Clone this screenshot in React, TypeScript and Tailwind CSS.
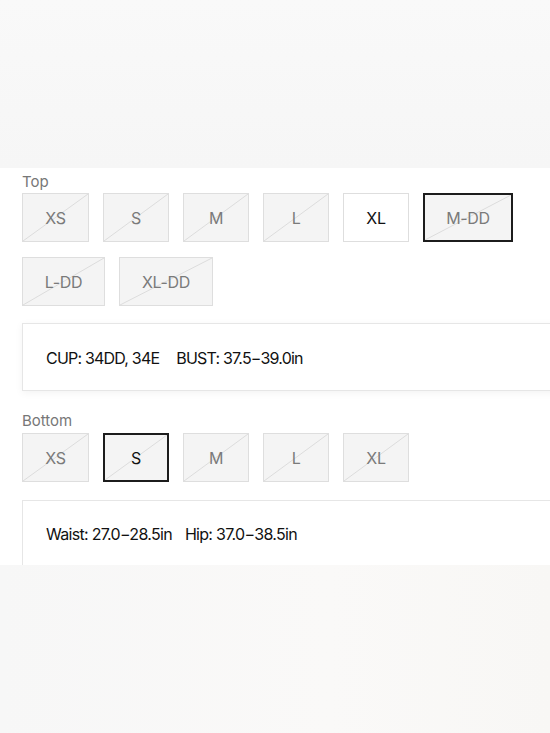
import React from 'react';

type Size = { label: string; w: number; disabled?: boolean; selected?: boolean };

const topSizes: Size[] = [
  { label: 'XS', w: 67, disabled: true },
  { label: 'S', w: 66, disabled: true },
  { label: 'M', w: 66, disabled: true },
  { label: 'L', w: 66, disabled: true },
  { label: 'XL', w: 66 },
  { label: 'M-DD', w: 90, disabled: true, selected: true },
  { label: 'L-DD', w: 83, disabled: true },
  { label: 'XL-DD', w: 94, disabled: true },
];

const bottomSizes: Size[] = [
  { label: 'XS', w: 67, disabled: true },
  { label: 'S', w: 66, disabled: true, selected: true },
  { label: 'M', w: 66, disabled: true },
  { label: 'L', w: 66, disabled: true },
  { label: 'XL', w: 66, disabled: true },
];

function SizeButton({ s, darkText }: { s: Size; darkText?: boolean }) {
  const border = s.selected ? 'border-2 border-[#1c1c1c]' : 'border border-[#dedede]';
  const bg = s.disabled ? 'bg-[#f4f4f4]' : 'bg-white';
  const color = s.disabled && !darkText ? 'text-[#7a7a7a]' : 'text-[#111]';
  return (
    <button
      className={`relative h-[49px] flex items-center justify-center text-[16px] tracking-[-0.3px] ${border} ${bg} ${color}`}
      style={{ width: s.w }}
    >
      {s.disabled && (
        <svg className="absolute inset-0 w-full h-full" preserveAspectRatio="none" viewBox="0 0 100 100">
          <line x1="0" y1="100" x2="100" y2="0" stroke="#dcdcdc" strokeWidth="1" vectorEffect="non-scaling-stroke" />
        </svg>
      )}
      <span className="relative">{s.label}</span>
    </button>
  );
}

export default function App() {
  return (
    <div className="w-[550px] h-[733px] flex flex-col overflow-hidden" style={{ fontFamily: 'Inter, "Liberation Sans", sans-serif' }}>
      <div className="h-[168px] shrink-0 bg-[linear-gradient(to_bottom,#f9f9f9,#f6f6f6)]" />
      <div className="bg-white pl-[22px] pt-[4px] overflow-hidden">
        <div className="text-[15px] leading-[20px] text-[#777] mb-[1px]">Top</div>
        <div className="flex flex-wrap gap-x-[14px] gap-y-[15px] w-[510px]">
          {topSizes.map((s) => (
            <SizeButton key={s.label} s={s} />
          ))}
        </div>
        <div className="mt-[17px] w-[600px] h-[68px] border border-[#e6e6e6] bg-white shadow-[0_2px_8px_rgba(0,0,0,0.05)] flex items-center pl-[23px] pt-[1px] text-[16px] tracking-[-0.8px] text-[#111]">
          <span>CUP: 34DD, 34E</span>
          <span className="ml-[17px]">BUST: 37.5−39.0in</span>
        </div>
        <div className="mt-[20px] text-[15px] leading-[20px] text-[#777] mb-[2px]">Bottom</div>
        <div className="flex gap-x-[14px]">
          {bottomSizes.map((s) => (
            <SizeButton key={s.label} s={s} darkText={s.selected} />
          ))}
        </div>
        <div className="mt-[18px] w-[600px] h-[65px] border border-b-0 border-[#e6e6e6] bg-white flex items-center pl-[23px] pt-[2px] text-[16px] tracking-[-0.7px] text-[#111]">
          <span>Waist: 27.0−28.5in</span>
          <span className="ml-[13px]">Hip: 37.0−38.5in</span>
        </div>
      </div>
      <div className="flex-1 bg-[linear-gradient(to_right,#f7f7f7,#faf9f8_60%,#f8f7f5)]" />
    </div>
  );
}
